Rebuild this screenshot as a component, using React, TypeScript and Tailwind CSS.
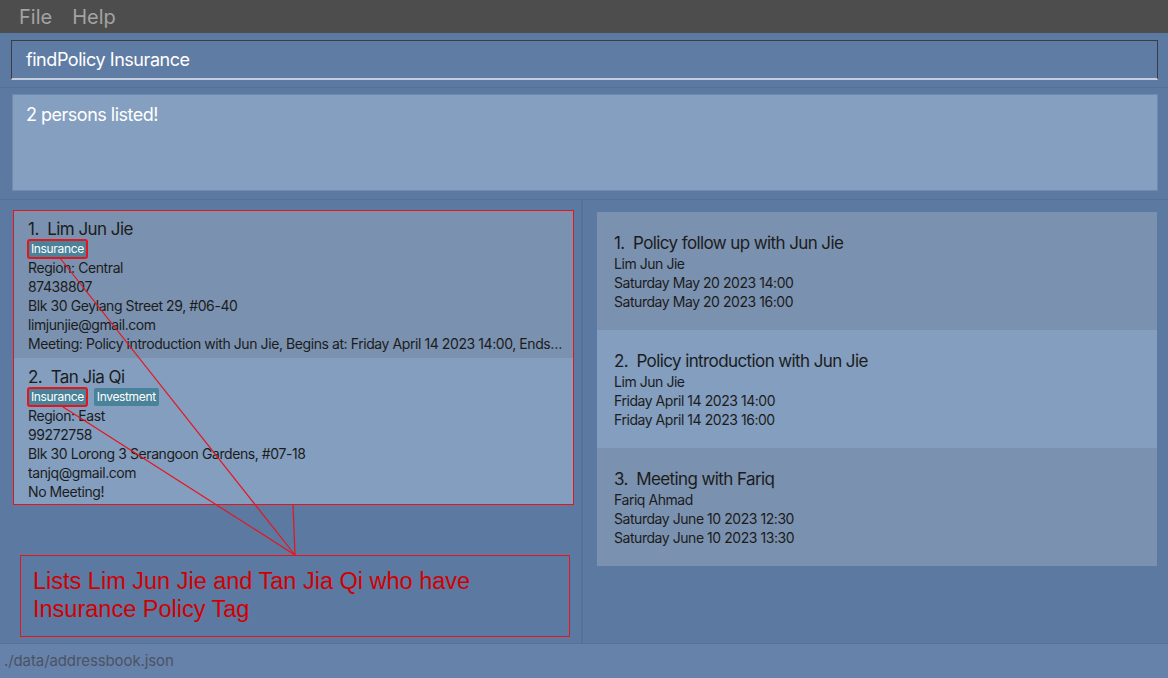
import React from "react";

const persons = [
  {
    idx: 1,
    name: "Lim Jun Jie",
    tags: ["Insurance"],
    lines: [
      "Region: Central",
      "87438807",
      "Blk 30 Geylang Street 29, #06-40",
      "limjunjie@gmail.com",
      "Meeting: Policy introduction with Jun Jie, Begins at: Friday April 14 2023 14:00, Ends at: Friday April 14 2023 16:00",
    ],
    dark: true,
  },
  {
    idx: 2,
    name: "Tan Jia Qi",
    tags: ["Insurance", "Investment"],
    lines: [
      "Region: East",
      "99272758",
      "Blk 30 Lorong 3 Serangoon Gardens, #07-18",
      "tanjq@gmail.com",
      "No Meeting!",
    ],
    dark: false,
  },
];

const meetings = [
  {
    idx: 1,
    title: "Policy follow up with Jun Jie",
    lines: ["Lim Jun Jie", "Saturday May 20 2023 14:00", "Saturday May 20 2023 16:00"],
    dark: true,
  },
  {
    idx: 2,
    title: "Policy introduction with Jun Jie",
    lines: ["Lim Jun Jie", "Friday April 14 2023 14:00", "Friday April 14 2023 16:00"],
    dark: false,
  },
  {
    idx: 3,
    title: "Meeting with Fariq",
    lines: ["Fariq Ahmad", "Saturday June 10 2023 12:30", "Saturday June 10 2023 13:30"],
    dark: true,
  },
];

export default function App() {
  return (
    <div
      className="relative w-[1168px] h-[678px] flex flex-col bg-[#5c79a2] overflow-hidden"
      style={{ fontFamily: "Inter, 'Open Sans', sans-serif" }}
    >
      {/* Menu bar */}
      <div className="h-[33px] shrink-0 bg-[#4d4d4d] flex items-center pl-[19px] gap-[20px] text-[20px] text-[#a3a3a3]">
        <span>File</span>
        <span>Help</span>
      </div>

      {/* Command box */}
      <div className="h-[55px] shrink-0 px-[11px] pt-[7px] border-b border-[#54719a]">
        <div className="h-[40px] w-[1147px] bg-[#5f7ca4] border border-[#3a3d42] border-b-2 border-b-[#c5cedf] flex items-center pl-[14px] text-[18px] text-white tracking-[-0.45px]">
          findPolicy Insurance
        </div>
      </div>

      {/* Result display */}
      <div className="h-[112px] shrink-0 px-[12px] pt-[6px] border-b border-[#54719a]">
        <div className="h-[97px] w-[1146px] bg-[#859fc0] border border-[#7089ae] px-[13px] pt-[6px] text-[18px] text-white tracking-[-0.5px]">
          2 persons listed!
        </div>
      </div>

      {/* Lists */}
      <div className="flex-1 flex min-h-0">
        <div className="w-[583px] shrink-0 border-r-2 border-[#56729b] pl-[13px] pt-[10px]">
          <div className="w-[561px] border border-[#e8141c] flex flex-col">
            {persons.map((p) => (
              <div
                key={p.idx}
                className={`${p.dark ? "bg-[#7a91af] pt-[7px] pb-[5px]" : "bg-[#839ebf] pt-[8px] pb-[3px]"} pl-[14px] pr-[10px] text-[#1c1c1c]`}
              >
                <div className="text-[17px] leading-[22px] tracking-[-0.55px]">
                  {p.idx}.&nbsp;&nbsp;{p.name}
                </div>
                <div className="flex gap-[7px]">
                  {p.tags.map((t, i) => (
                    <span
                      key={t}
                      className={`h-[18px] px-[3px] flex items-center bg-[#4a8399] text-white text-[12px] tracking-[-0.35px] rounded-[2px] ${
                        i === 0 ? "outline-2 outline-[#e8141c] -outline-offset-1" : ""
                      }`}
                    >
                      {t}
                    </span>
                  ))}
                </div>
                {p.lines.map((l, i) => (
                  <div
                    key={i}
                    className="text-[14px] leading-[19px] whitespace-nowrap overflow-hidden text-ellipsis tracking-[-0.42px]"
                  >
                    {l}
                  </div>
                ))}
              </div>
            ))}
          </div>
        </div>
        <div className="flex-1 pl-[14px] pt-[12px] pr-[9px]">
          <div className="w-[560px] flex flex-col">
            {meetings.map((m) => (
              <div
                key={m.idx}
                className={`${m.dark ? "bg-[#7a91af]" : "bg-[#839ebf]"} h-[118px] pl-[17px] pt-[20px] text-[#1c1c1c]`}
              >
                <div className="text-[17px] leading-[22px] tracking-[-0.6px]">
                  {m.idx}.&nbsp;&nbsp;{m.title}
                </div>
                {m.lines.map((l, i) => (
                  <div key={i} className="text-[14px] leading-[19px] tracking-[-0.45px]">
                    {l}
                  </div>
                ))}
              </div>
            ))}
          </div>
        </div>
      </div>

      {/* Status bar */}
      <div className="h-[35px] shrink-0 bg-[#6782aa] border-t border-[#56729b] flex items-center pl-[4px] text-[15px] text-[#4a5364] tracking-[-0.1px]">
        ./data/addressbook.json
      </div>

      {/* Annotation overlay */}
      <svg
        className="absolute inset-0 pointer-events-none"
        width={1168}
        height={678}
        viewBox="0 0 1168 678"
      >
        <line x1={60} y1={258} x2={295} y2={555} stroke="#e8141c" strokeWidth={1.2} />
        <line x1={60} y1={405} x2={295} y2={555} stroke="#e8141c" strokeWidth={1.2} />
        <line x1={293} y1={505} x2={295} y2={555} stroke="#e8141c" strokeWidth={1.2} />
      </svg>
      <div
        className="absolute left-[20px] top-[555px] w-[550px] h-[82px] border border-[#e8141c] pl-[12px] pt-[11px] text-[23.5px] leading-[28px] text-[#d10000]"
        style={{ fontFamily: "'Liberation Sans', Arial, sans-serif" }}
      >
        Lists Lim Jun Jie and Tan Jia Qi who have
        <br />
        Insurance Policy Tag
      </div>
    </div>
  );
}
